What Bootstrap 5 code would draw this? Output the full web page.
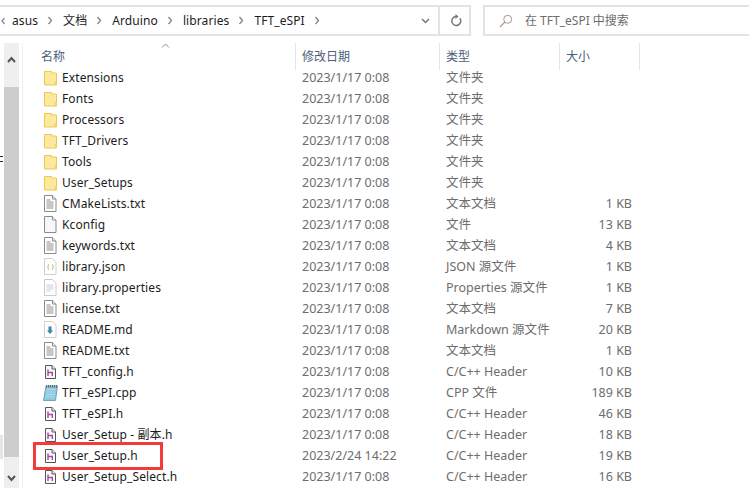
<!doctype html>
<html lang="zh-CN">
<head>
<meta charset="utf-8">
<title>TFT_eSPI</title>
<link href="https://cdn.jsdelivr.net/npm/bootstrap@5.3.0/dist/css/bootstrap.min.css" rel="stylesheet">
<style>
html,body{width:749px;height:499px;overflow:hidden;background:#fff;margin:0}
body{font-family:"Noto Sans","Noto Sans CJK SC",sans-serif;font-size:12px;line-height:21px;color:#1c1c1c}
.ex-bar{margin-top:5px;height:31px}
.ex-addr{width:471px;border:2px solid #e3e3e3;border-left:0}
.ex-crumb{padding-left:1px;font-size:12px;letter-spacing:.1px}
.ex-crumb svg{flex:none}
.ex-c1{margin:0 9px 0 7px}.ex-c2{margin:0 9px 0 10px}
.ex-ref{width:29px;padding-left:3px}
.ex-drophead{margin-left:auto;width:28px;height:100%;border-right:2px solid #e3e3e3}
.ex-search{margin-left:12px;flex:1;border:2px solid #e3e3e3;border-right:0;color:#6d6d6d;padding-left:14px;gap:12px;font-size:12px}
.ex-main{margin-top:7px}
.ex-gut{width:4px;height:445px;position:relative;flex:none}
.ex-scroll{width:15px;height:445px;background:#efefef;flex:none}
.ex-arrow{height:44px;padding-top:5px}
.ex-thumb{height:370px;background:#cdcdcd}
.ex-down{height:31px;padding-top:10px}
.ex-sep{width:1px;height:445px;background:#f0f0f0;margin-left:3px;flex:none}
.ex-list{flex:1;min-width:0}
.ex-head{height:24px;color:#4c607a;position:relative;font-size:12px}
.ex-head>div{height:27px;border-right:1px solid #e5e5e5;padding-top:3px}
.ex-caret{position:absolute;left:138px;top:0}
.ex-w1{width:273px;flex:none}.ex-w2{width:144px;flex:none;padding-left:6px}.ex-w3{width:120px;flex:none;padding-left:6px}.ex-w4{width:80px;flex:none}
.ex-head .ex-w1{padding-left:18px}
.ex-head .ex-w4{padding-left:6px}
.ex-row{height:21px;white-space:nowrap;position:relative}
.ex-name{padding-left:21px;gap:5px;display:flex;align-items:center;letter-spacing:.1px}
.ex-name svg{flex:none}
.ex-name .ex-hicon{margin-left:1px;margin-right:1px}
.ex-name .ex-cicon{margin-left:-1px;margin-right:-1px}
.ex-meta{color:#6d6d6d;font-size:12.5px}
.ex-size{text-align:right;padding-right:8px}
.ex-frame{position:absolute;left:10px;top:-3px;width:130px;height:28px;border:3px solid #f43a3a;pointer-events:none}
.ex-bit1{position:absolute;left:0;top:113px;width:3px;height:6px;border-top:1px solid #222;border-bottom:1px solid #222}
.ex-bit2{position:absolute;left:0;top:392px;width:3px;height:24px;background:#e6e6e6}
</style>
</head>
<body>
<svg width="0" height="0" class="position-absolute">
<defs>
<symbol id="i-folder" viewBox="0 0 13 16"><path d="M.5 1.500h7v1.500h5v12H.5z" fill="#fde99e" stroke="#ecc94f"/><path d="M10.500 15v-4h2v4z" fill="#f6d467"/></symbol>
<symbol id="i-text" viewBox="0 0 13 17"><path d="M.5.5h8l3.500 3.500v12.500H.5z" fill="#fff" stroke="#8a8a8a"/><path d="M8.500.5v3.500H12" fill="#eee" stroke="#8a8a8a"/><path d="M2.500 5h4M2.500 7h7M2.500 9h7M2.500 11h7M2.500 13h7" stroke="#8e8e8e"/></symbol>
<symbol id="i-blank" viewBox="0 0 13 17"><path d="M.5.5h8l3.500 3.500v12.500H.5z" fill="#f7f7f7" stroke="#8a8a8a"/><path d="M8.500.5v3.500H12" fill="#fff" stroke="#8a8a8a"/></symbol>
<symbol id="i-json" viewBox="0 0 13 17"><path d="M.5.500h8l3.500 3.500v12.500H.5z" fill="#fff" stroke="#cfcfcf"/><path d="M5 6.500Q4 6.500 4 8v2q0 1.500 1 1.500M8 6.500q1 0 1 1.500v2q0 1.500-1 1.500" fill="none" stroke="#b8bf7a"/></symbol>
<symbol id="i-prop" viewBox="0 0 13 17"><path d="M.5.500h8l3.500 3.500v12.500H.5z" fill="#fff" stroke="#c9c9c9"/><path d="M2.500 6h7M2.500 8h7M2.500 10h7M2.500 12h4" stroke="#cccccc"/></symbol>
<symbol id="i-md" viewBox="0 0 13 17"><path d="M.5.500h8l3.500 3.500v12.500H.5z" fill="#fff" stroke="#d0d0d0"/><path d="M4.500 5.500h3v4h1.500L6 13 3 9.500h1.500z" fill="#3d84a8"/></symbol>
<symbol id="i-h" viewBox="0 0 11 14"><path d="M.5.500h6.500l3.500 3.500v9.500H.5z" fill="#f8f8f8" stroke="#555"/><path d="M7 .5v3.500h3.500" fill="#eee" stroke="#555"/><path d="M3 4.500v6.500M3 7.500h4.300v3.500" fill="none" stroke="#a548a8" stroke-width="1.400"/></symbol>
<symbol id="i-cpp" viewBox="0 0 15 17"><path d="M3 2h11.500l-2 14.500H.5z" fill="#8cc8de" stroke="#6fa4be"/><path d="M3.500 5.500h9M3.200 8h9M3 10.500h9M2.700 13h9" stroke="#b4dcec"/><path d="M3.500 1v2.500M5.500 1v2.500M7.500 1v2.500M9.500 1v2.500M11.500 1v2.500M13.500 1v2.500" stroke="#666"/></symbol>
</defs>
</svg>

<div class="d-flex ex-bar">
  <div class="ex-addr d-flex align-items-center">
    <div class="d-flex align-items-center ex-crumb flex-grow-1 h-100">
      <svg width="4" height="8" viewBox="0 0 4 8"><path d="M3.500 1 1 4l2.500 3" fill="none" stroke="#888" stroke-width="1.200"/></svg>
      <span class="ex-c1">asus</span>
      <svg width="6" height="9" viewBox="0 0 6 9"><path d="M1.500 1 4.500 4.500l-3 3.500" fill="none" stroke="#888" stroke-width="1.400"/></svg>
      <span class="ex-c2">文档</span>
      <svg width="6" height="9" viewBox="0 0 6 9"><path d="M1.500 1 4.500 4.500l-3 3.500" fill="none" stroke="#888" stroke-width="1.400"/></svg>
      <span class="ex-c2">Arduino</span>
      <svg width="6" height="9" viewBox="0 0 6 9"><path d="M1.500 1 4.500 4.500l-3 3.500" fill="none" stroke="#888" stroke-width="1.400"/></svg>
      <span class="ex-c2">libraries</span>
      <svg width="6" height="9" viewBox="0 0 6 9"><path d="M1.500 1 4.500 4.500l-3 3.500" fill="none" stroke="#888" stroke-width="1.400"/></svg>
      <span class="ex-c2">TFT_eSPI</span>
      <svg width="6" height="9" viewBox="0 0 6 9"><path d="M1.500 1 4.500 4.500l-3 3.500" fill="none" stroke="#888" stroke-width="1.400"/></svg>
      <div class="ex-drophead d-flex align-items-center justify-content-center">
        <svg width="9" height="6" viewBox="0 0 9 6"><path d="M1 1l3.500 3.500L8 1" fill="none" stroke="#777" stroke-width="1.500"/></svg>
      </div>
    </div>
    <div class="ex-ref d-flex align-items-center justify-content-center">
      <svg width="12" height="13" viewBox="0 0 12 13"><path d="M9.800 4.200A4.500 4.500 0 1 1 6 2.500" fill="none" stroke="#777" stroke-width="1.500"/><path d="M5.500 0v5l3-2.500z" fill="#777"/></svg>
    </div>
  </div>
  <div class="ex-search d-flex align-items-center">
    <svg width="14" height="14" viewBox="0 0 14 14"><circle cx="8.700" cy="5.300" r="4" fill="none" stroke="#999"/><path d="M5.700 8.300 1 13" stroke="#c59a7c" stroke-width="1.300"/></svg>
    <span>在 TFT_eSPI 中搜索</span>
  </div>
</div>

<div class="d-flex ex-main">
  <div class="ex-gut"><div class="ex-bit1"></div><div class="ex-bit2"></div></div>
  <div class="ex-scroll d-flex flex-column align-items-center">
    <div class="ex-arrow"><svg width="9" height="7" viewBox="0 0 9 7"><path d="M1 6l3.500-4L8 6" fill="none" stroke="#555" stroke-width="2"/></svg></div>
    <div class="ex-thumb w-100"></div>
    <div class="ex-down"><svg width="9" height="7" viewBox="0 0 9 7"><path d="M1 1l3.500 4L8 1" fill="none" stroke="#555" stroke-width="2"/></svg></div>
  </div>
  <div class="ex-sep"></div>
  <div class="ex-list">
    <div class="ex-head d-flex">
      <div class="ex-w1">名称</div><div class="ex-w2">修改日期</div><div class="ex-w3">类型</div><div class="ex-w4">大小</div>
      <svg class="ex-caret" width="9" height="5" viewBox="0 0 9 5"><path d="M1 4.500 4.500 1 8 4.500" fill="none" stroke="#8a8a8a"/></svg>
    </div>
    <div id="rows">
      <div class="ex-row d-flex"><div class="ex-w1 ex-name"><svg width="13" height="16"><use href="#i-folder"/></svg>Extensions</div><div class="ex-w2 ex-meta">2023/1/17 0:08</div><div class="ex-w3 ex-meta">文件夹</div><div class="ex-w4 ex-meta ex-size"></div></div>
      <div class="ex-row d-flex"><div class="ex-w1 ex-name"><svg width="13" height="16"><use href="#i-folder"/></svg>Fonts</div><div class="ex-w2 ex-meta">2023/1/17 0:08</div><div class="ex-w3 ex-meta">文件夹</div><div class="ex-w4 ex-meta ex-size"></div></div>
      <div class="ex-row d-flex"><div class="ex-w1 ex-name"><svg width="13" height="16"><use href="#i-folder"/></svg>Processors</div><div class="ex-w2 ex-meta">2023/1/17 0:08</div><div class="ex-w3 ex-meta">文件夹</div><div class="ex-w4 ex-meta ex-size"></div></div>
      <div class="ex-row d-flex"><div class="ex-w1 ex-name"><svg width="13" height="16"><use href="#i-folder"/></svg>TFT_Drivers</div><div class="ex-w2 ex-meta">2023/1/17 0:08</div><div class="ex-w3 ex-meta">文件夹</div><div class="ex-w4 ex-meta ex-size"></div></div>
      <div class="ex-row d-flex"><div class="ex-w1 ex-name"><svg width="13" height="16"><use href="#i-folder"/></svg>Tools</div><div class="ex-w2 ex-meta">2023/1/17 0:08</div><div class="ex-w3 ex-meta">文件夹</div><div class="ex-w4 ex-meta ex-size"></div></div>
      <div class="ex-row d-flex"><div class="ex-w1 ex-name"><svg width="13" height="16"><use href="#i-folder"/></svg>User_Setups</div><div class="ex-w2 ex-meta">2023/1/17 0:08</div><div class="ex-w3 ex-meta">文件夹</div><div class="ex-w4 ex-meta ex-size"></div></div>
      <div class="ex-row d-flex"><div class="ex-w1 ex-name"><svg width="13" height="17"><use href="#i-text"/></svg>CMakeLists.txt</div><div class="ex-w2 ex-meta">2023/1/17 0:08</div><div class="ex-w3 ex-meta">文本文档</div><div class="ex-w4 ex-meta ex-size">1 KB</div></div>
      <div class="ex-row d-flex"><div class="ex-w1 ex-name"><svg width="13" height="17"><use href="#i-blank"/></svg>Kconfig</div><div class="ex-w2 ex-meta">2023/1/17 0:08</div><div class="ex-w3 ex-meta">文件</div><div class="ex-w4 ex-meta ex-size">13 KB</div></div>
      <div class="ex-row d-flex"><div class="ex-w1 ex-name"><svg width="13" height="17"><use href="#i-text"/></svg>keywords.txt</div><div class="ex-w2 ex-meta">2023/1/17 0:08</div><div class="ex-w3 ex-meta">文本文档</div><div class="ex-w4 ex-meta ex-size">4 KB</div></div>
      <div class="ex-row d-flex"><div class="ex-w1 ex-name"><svg width="13" height="17"><use href="#i-json"/></svg>library.json</div><div class="ex-w2 ex-meta">2023/1/17 0:08</div><div class="ex-w3 ex-meta">JSON 源文件</div><div class="ex-w4 ex-meta ex-size">1 KB</div></div>
      <div class="ex-row d-flex"><div class="ex-w1 ex-name"><svg width="13" height="17"><use href="#i-prop"/></svg>library.properties</div><div class="ex-w2 ex-meta">2023/1/17 0:08</div><div class="ex-w3 ex-meta">Properties 源文件</div><div class="ex-w4 ex-meta ex-size">1 KB</div></div>
      <div class="ex-row d-flex"><div class="ex-w1 ex-name"><svg width="13" height="17"><use href="#i-text"/></svg>license.txt</div><div class="ex-w2 ex-meta">2023/1/17 0:08</div><div class="ex-w3 ex-meta">文本文档</div><div class="ex-w4 ex-meta ex-size">7 KB</div></div>
      <div class="ex-row d-flex"><div class="ex-w1 ex-name"><svg width="13" height="17"><use href="#i-md"/></svg>README.md</div><div class="ex-w2 ex-meta">2023/1/17 0:08</div><div class="ex-w3 ex-meta">Markdown 源文件</div><div class="ex-w4 ex-meta ex-size">20 KB</div></div>
      <div class="ex-row d-flex"><div class="ex-w1 ex-name"><svg width="13" height="17"><use href="#i-text"/></svg>README.txt</div><div class="ex-w2 ex-meta">2023/1/17 0:08</div><div class="ex-w3 ex-meta">文本文档</div><div class="ex-w4 ex-meta ex-size">1 KB</div></div>
      <div class="ex-row d-flex"><div class="ex-w1 ex-name"><svg class="ex-hicon" width="11" height="14"><use href="#i-h"/></svg>TFT_config.h</div><div class="ex-w2 ex-meta">2023/1/17 0:08</div><div class="ex-w3 ex-meta">C/C++ Header</div><div class="ex-w4 ex-meta ex-size">10 KB</div></div>
      <div class="ex-row d-flex"><div class="ex-w1 ex-name"><svg class="ex-cicon" width="15" height="17"><use href="#i-cpp"/></svg>TFT_eSPI.cpp</div><div class="ex-w2 ex-meta">2023/1/17 0:08</div><div class="ex-w3 ex-meta">CPP 文件</div><div class="ex-w4 ex-meta ex-size">189 KB</div></div>
      <div class="ex-row d-flex"><div class="ex-w1 ex-name"><svg class="ex-hicon" width="11" height="14"><use href="#i-h"/></svg>TFT_eSPI.h</div><div class="ex-w2 ex-meta">2023/1/17 0:08</div><div class="ex-w3 ex-meta">C/C++ Header</div><div class="ex-w4 ex-meta ex-size">46 KB</div></div>
      <div class="ex-row d-flex"><div class="ex-w1 ex-name"><svg class="ex-hicon" width="11" height="14"><use href="#i-h"/></svg>User_Setup - 副本.h</div><div class="ex-w2 ex-meta">2023/1/17 0:08</div><div class="ex-w3 ex-meta">C/C++ Header</div><div class="ex-w4 ex-meta ex-size">18 KB</div></div>
      <div class="ex-row d-flex"><div class="ex-w1 ex-name"><svg class="ex-hicon" width="11" height="14"><use href="#i-h"/></svg>User_Setup.h</div><div class="ex-w2 ex-meta">2023/2/24 14:22</div><div class="ex-w3 ex-meta">C/C++ Header</div><div class="ex-w4 ex-meta ex-size">19 KB</div><div class="ex-frame"></div></div>
      <div class="ex-row d-flex"><div class="ex-w1 ex-name"><svg class="ex-hicon" width="11" height="14"><use href="#i-h"/></svg>User_Setup_Select.h</div><div class="ex-w2 ex-meta">2023/1/17 0:08</div><div class="ex-w3 ex-meta">C/C++ Header</div><div class="ex-w4 ex-meta ex-size">16 KB</div></div>
    </div>
  </div>
</div>
</body>
</html>
